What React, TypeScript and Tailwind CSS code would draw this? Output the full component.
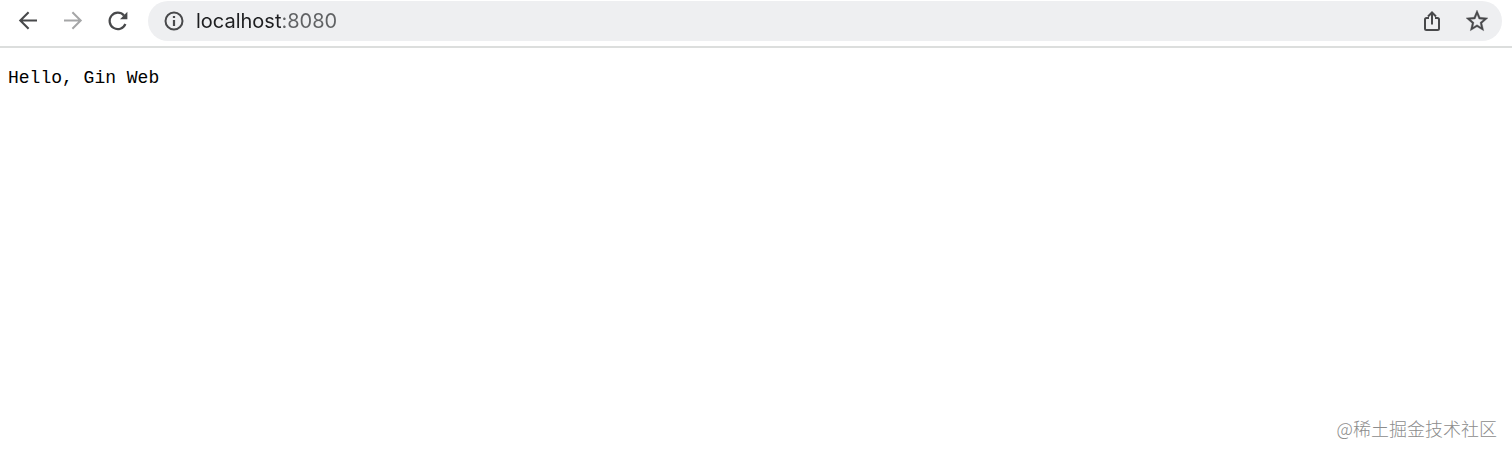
import { useState } from 'react'

function BackIcon() {
  return (
    <svg viewBox="0 0 24 24" className="size-6" fill="none" stroke="currentColor" strokeWidth="2.1" aria-hidden="true">
      <path d="M21 11.5H4.6M12.6 3.2L4.3 11.5l8.3 8.3" />
    </svg>
  )
}

function ForwardIcon() {
  return (
    <svg viewBox="0 0 24 24" className="size-6" fill="none" stroke="currentColor" strokeWidth="2" aria-hidden="true">
      <path d="M3 11.5h16.4M11.4 3.2l8.3 8.3-8.3 8.3" />
    </svg>
  )
}

function ReloadIcon() {
  return (
    <svg viewBox="0 0 24 24" className="size-6" aria-hidden="true">
      <path d="M19.4 15A8.2 8.2 0 1 1 18 6.5" fill="none" stroke="currentColor" strokeWidth="2.2" />
      <path d="M21.4 2.8v7.4H14z" fill="currentColor" />
    </svg>
  )
}

function InfoIcon() {
  return (
    <svg viewBox="0 0 20 20" className="size-5" aria-hidden="true">
      <circle cx="10" cy="10" r="8.5" fill="none" stroke="currentColor" strokeWidth="2" />
      <path d="M8.9 5h2.2v2.1H8.9zM8.9 9h2.2v6H8.9z" fill="currentColor" />
    </svg>
  )
}

function ShareIcon() {
  return (
    <svg viewBox="0 0 24 24" className="size-6" fill="none" stroke="currentColor" strokeWidth="2" aria-hidden="true">
      <path d="M9 9H6.5A1.5 1.5 0 0 0 5 10.500v9A1.5 1.5 0 0 0 6.500 21h11a1.500 1.500 0 0 0 1.500-1.500v-9A1.500 1.500 0 0 0 17.500 9H15" />
      <path d="M12 15.500V4M8 7.500l4-4 4 4" />
    </svg>
  )
}

function StarIcon() {
  return (
    <svg viewBox="1 1 22 22" className="size-6" fill="currentColor" stroke="currentColor" strokeWidth="0.3" aria-hidden="true">
      <path d="M22 9.24l-7.19-.62L12 2 9.19 8.63 2 9.24l5.46 4.73L5.82 21 12 17.27 18.18 21l-1.63-7.03L22 9.24zM12 15.4l-3.76 2.27 1-4.28-3.32-2.88 4.38-.38L12 6.1l1.71 4.04 4.38.38-3.32 2.88 1 4.28L12 15.4z" />
    </svg>
  )
}

export default function App() {
  const [url, setUrl] = useState('localhost:8080')

  return (
    <div className="flex min-h-screen flex-col bg-white">
      <header className="flex items-center border-b-2 border-[#dcdedd] pt-px pr-2.5 pb-[5px] pl-4 text-[#48494b]">
        <nav className="flex items-center gap-[21px] pr-[18px]">
          <button type="button" aria-label="Back" className="block">
            <BackIcon />
          </button>
          <button type="button" aria-label="Forward" className="block text-[#a5a6a7]" disabled>
            <ForwardIcon />
          </button>
          <button type="button" aria-label="Reload" className="block">
            <ReloadIcon />
          </button>
        </nav>

        <div className="flex h-10 flex-1 items-center rounded-full bg-[#eeeff1] pr-[13px] pl-4">
          <button type="button" aria-label="Site information" className="block">
            <InfoIcon />
          </button>
          {/* host is dark, port is grey */}
          <input
            type="text"
            aria-label="Address"
            spellCheck={false}
            value={url}
            onChange={(e) => setUrl(e.target.value)}
            className="ml-3 min-w-0 flex-1 bg-[linear-gradient(to_right,#1d1e20_85px,#5f6163_85px)] bg-clip-text font-['Inter',sans-serif] text-xl leading-7 text-transparent caret-black outline-none"
          />
          <div className="flex items-center gap-[21px]">
            <button type="button" aria-label="Share" className="block">
              <ShareIcon />
            </button>
            <button type="button" aria-label="Bookmark this page" className="block">
              <StarIcon />
            </button>
          </div>
        </div>
      </header>

      <main className="flex flex-1 flex-col justify-between">
        <pre className="px-2 pt-4 font-['Liberation_Mono',monospace] text-lg leading-7 text-black">Hello, Gin Web</pre>
        <p className="self-end pr-[15px] pb-[13px] font-['Noto_Sans_CJK_SC',sans-serif] text-lg leading-7 font-light text-[#8c8c8c]">
          @稀土掘金技术社区
        </p>
      </main>
    </div>
  )
}
